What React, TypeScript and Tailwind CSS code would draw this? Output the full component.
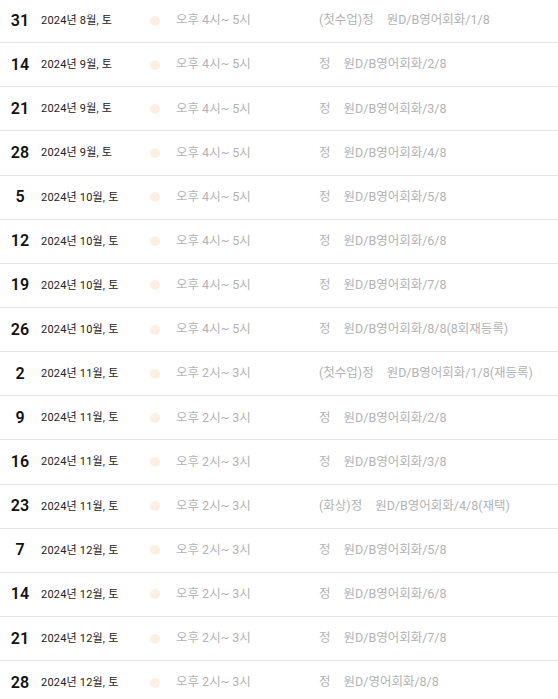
import React from 'react';

type Lesson = {
  day: string;
  month: string;
  time: string;
  prefix: string;
  course: string;
};

const lessons: Lesson[] = [
  { day: '31', month: '2024년 8월, 토', time: '오후 4시~ 5시', prefix: '(첫수업)정', course: '원D/B영어회화/1/8' },
  { day: '14', month: '2024년 9월, 토', time: '오후 4시~ 5시', prefix: '정', course: '원D/B영어회화/2/8' },
  { day: '21', month: '2024년 9월, 토', time: '오후 4시~ 5시', prefix: '정', course: '원D/B영어회화/3/8' },
  { day: '28', month: '2024년 9월, 토', time: '오후 4시~ 5시', prefix: '정', course: '원D/B영어회화/4/8' },
  { day: '5', month: '2024년 10월, 토', time: '오후 4시~ 5시', prefix: '정', course: '원D/B영어회화/5/8' },
  { day: '12', month: '2024년 10월, 토', time: '오후 4시~ 5시', prefix: '정', course: '원D/B영어회화/6/8' },
  { day: '19', month: '2024년 10월, 토', time: '오후 4시~ 5시', prefix: '정', course: '원D/B영어회화/7/8' },
  { day: '26', month: '2024년 10월, 토', time: '오후 4시~ 5시', prefix: '정', course: '원D/B영어회화/8/8(8회재등록)' },
  { day: '2', month: '2024년 11월, 토', time: '오후 2시~ 3시', prefix: '(첫수업)정', course: '원D/B영어회화/1/8(재등록)' },
  { day: '9', month: '2024년 11월, 토', time: '오후 2시~ 3시', prefix: '정', course: '원D/B영어회화/2/8' },
  { day: '16', month: '2024년 11월, 토', time: '오후 2시~ 3시', prefix: '정', course: '원D/B영어회화/3/8' },
  { day: '23', month: '2024년 11월, 토', time: '오후 2시~ 3시', prefix: '(화상)정', course: '원D/B영어회화/4/8(재택)' },
  { day: '7', month: '2024년 12월, 토', time: '오후 2시~ 3시', prefix: '정', course: '원D/B영어회화/5/8' },
  { day: '14', month: '2024년 12월, 토', time: '오후 2시~ 3시', prefix: '정', course: '원D/B영어회화/6/8' },
  { day: '21', month: '2024년 12월, 토', time: '오후 2시~ 3시', prefix: '정', course: '원D/B영어회화/7/8' },
  { day: '28', month: '2024년 12월, 토', time: '오후 2시~ 3시', prefix: '정', course: '원D/영어회화/8/8' },
];

const font = { fontFamily: "Roboto, 'Noto Sans CJK KR', sans-serif" };

export default function App() {
  return (
    <div className="w-[558px] h-[699px] overflow-hidden bg-white" style={font}>
      <div className="-mt-[1px]">
        {lessons.map((l, i) => (
          <div key={i} className="flex items-center h-[44.15px] border-b border-[#e2e5ec]">
            <div className="w-[41px] pr-[1px] text-center text-[16px] font-semibold text-[#111] leading-none">{l.day}</div>
            <div className="w-[109px] text-[11px] font-normal tracking-[0.2px] text-[#222] leading-none">{l.month}</div>
            <div className="w-[26px]">
              <div className="w-[10px] h-[10px] rounded-full bg-[#fdf0e2]" />
            </div>
            <div className="w-[143px] text-[12.5px] text-[#b3b3b3] leading-none">{l.time}</div>
            <div className="flex-1 text-[12.5px] text-[#b3b3b3] leading-none whitespace-nowrap">
              {l.prefix}
              <span className="inline-block w-[13px]" />
              {l.course}
            </div>
          </div>
        ))}
      </div>
    </div>
  );
}
